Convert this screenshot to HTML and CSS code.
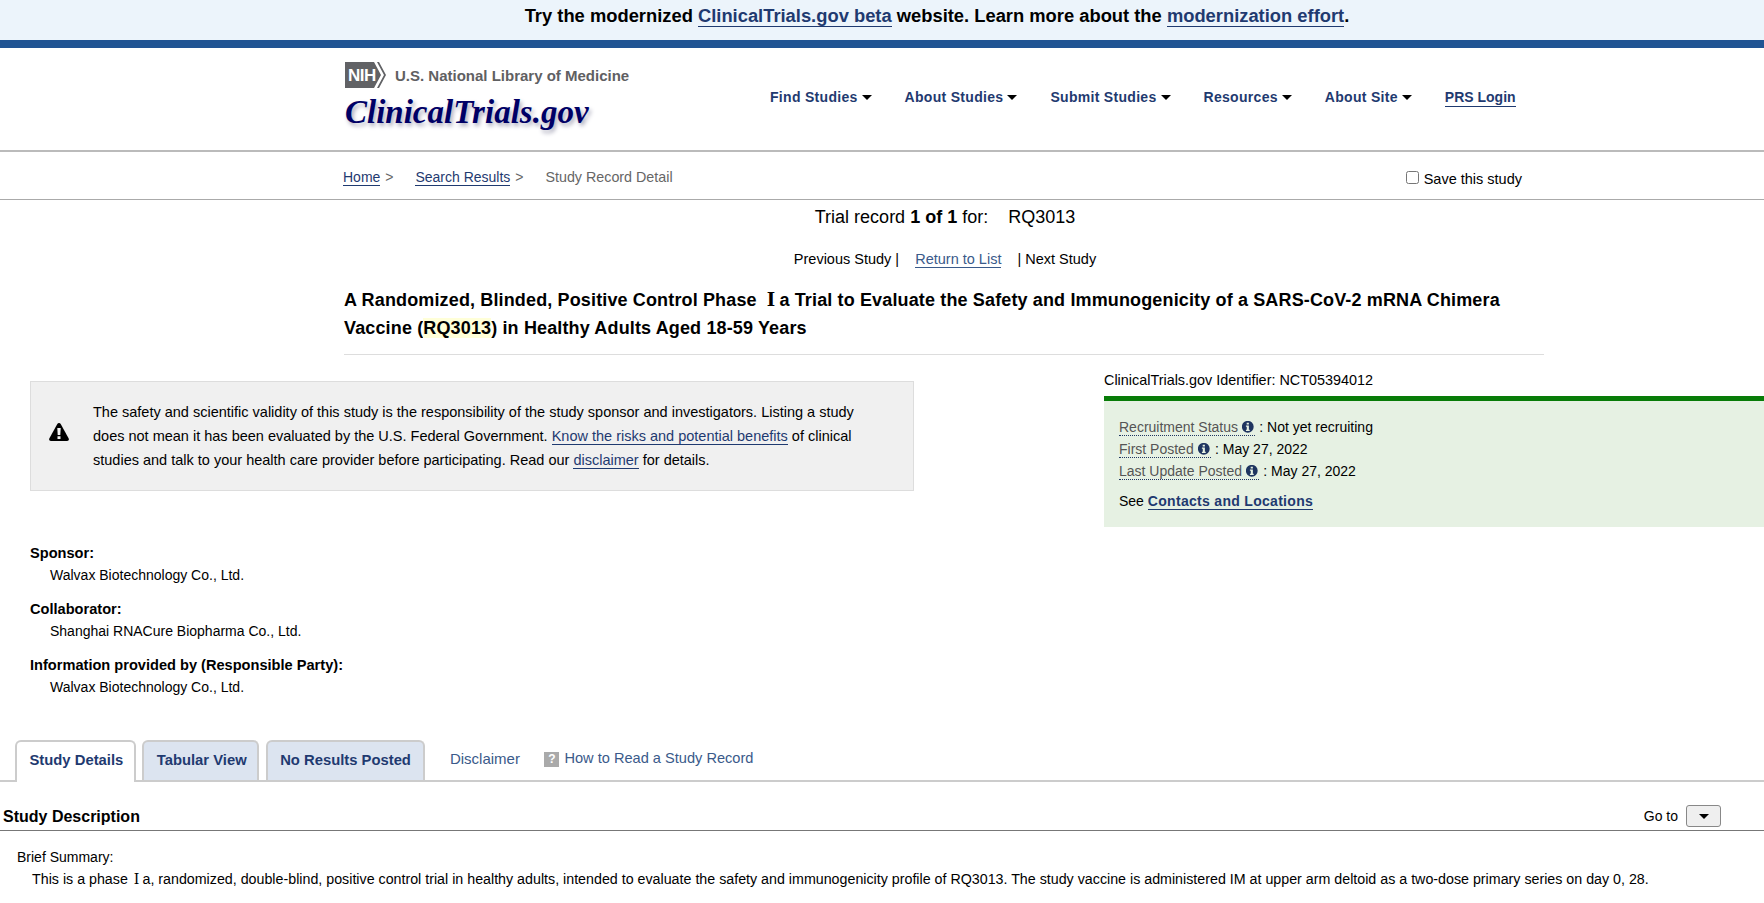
FILE: index.html
```html
<!DOCTYPE html>
<html lang="en">
<head>
<meta charset="utf-8">
<title>Study Record | ClinicalTrials.gov</title>
<link rel="stylesheet" href="styles.css">
</head>
<body>
<div class="banner">Try the modernized <a href="#">ClinicalTrials.gov beta</a> website. Learn more about the <a href="#">modernization effort</a>.</div>
<header class="header">
  <div class="brand">
    <div class="nlm">
      <svg class="nih" width="42" height="26" viewBox="0 0 42 26"><path d="M0 0H29L36 13L29 26H0Z" fill="#616265"/><path d="M32 0H34L41 13L34 26H32L39 13Z" fill="#616265"/><text x="3" y="19" class="nih-text">NIH</text></svg>
      <span>U.S. National Library of Medicine</span>
    </div>
    <div class="logo">ClinicalTrials.gov</div>
  </div>
  <nav class="nav">
    <a href="#">Find Studies<i></i></a>
    <a href="#">About Studies<i></i></a>
    <a href="#">Submit Studies<i></i></a>
    <a href="#">Resources<i></i></a>
    <a href="#">About Site<i></i></a>
    <a href="#" class="login">PRS Login</a>
  </nav>
</header>
<div class="crumbs">
  <div class="crumb-list">
    <span class="crumb"><a href="#">Home</a> &gt;</span>
    <span class="crumb"><a href="#">Search Results</a> &gt;</span>
    <span class="crumb-current">Study Record Detail</span>
  </div>
  <label class="save"><input type="checkbox"> Save this study</label>
</div>
<div class="record">Trial record <b>1 of 1</b> for: <span class="term">RQ3013</span></div>
<div class="pager">Previous Study | <a href="#">Return to List</a> | Next Study</div>
<h1 class="title">A Randomized, Blinded, Positive Control Phase <span class="roman">Ⅰ</span>a Trial to Evaluate the Safety and Immunogenicity of a SARS-CoV-2 mRNA Chimera Vaccine (<mark>RQ3013</mark>) in Healthy Adults Aged 18-59 Years</h1>
<main class="overview">
  <div class="left">
    <div class="warning">
      <svg class="warn-icon" width="20" height="18" viewBox="0 0 20 18"><path d="M10 0c.8 0 1.3.4 1.7 1l8 14.500c.6 1.200-.2 2.500-1.600 2.500H1.900C.5 18-.3 16.700.3 15.500l8-14.500C8.700.4 9.200 0 10 0Z" fill="#000"/><path d="M8.300 5h3.400l-.4 7H8.700Z M8.500 13.200h3v2.800h-3Z" fill="#f0f0f0"/></svg>
      <p>The safety and scientific validity of this study is the responsibility of the study sponsor and investigators. Listing a study does not mean it has been evaluated by the U.S. Federal Government. <a href="#">Know the risks and potential benefits</a> of clinical studies and talk to your health care provider before participating. Read our <a href="#">disclaimer</a> for details.</p>
    </div>
    <dl class="parties">
      <dt>Sponsor:</dt><dd>Walvax Biotechnology Co., Ltd.</dd>
      <dt>Collaborator:</dt><dd>Shanghai RNACure Biopharma Co., Ltd.</dd>
      <dt>Information provided by (Responsible Party):</dt><dd>Walvax Biotechnology Co., Ltd.</dd>
    </dl>
  </div>
  <aside class="right">
    <div class="ident">ClinicalTrials.gov Identifier: NCT05394012</div>
    <div class="status">
      <div class="status-row"><span class="term-tip">Recruitment Status <svg class="info" viewBox="1 1 14 14"><use href="#i"/></svg></span> : Not yet recruiting</div>
      <div class="status-row"><span class="term-tip">First Posted <svg class="info" viewBox="1 1 14 14"><use href="#i"/></svg></span> : May 27, 2022</div>
      <div class="status-row"><span class="term-tip">Last Update Posted <svg class="info" viewBox="1 1 14 14"><use href="#i"/></svg></span> : May 27, 2022</div>
      <div class="see">See <a href="#">Contacts and Locations</a></div>
    </div>
  </aside>
</main>
<svg class="defs" width="0" height="0"><symbol id="i" viewBox="0 0 16 16"><path fill-rule="evenodd" d="M8 1a7 7 0 1 1 0 14A7 7 0 0 1 8 1ZM6.700 3.200h2.600v2.200H6.700ZM5.800 6.600h3.500v5h1v1.500H5.800v-1.500h1V8.100h-1Z" fill="#1f3560"/></symbol></svg>
<div class="tabs">
  <a href="#" class="tab active">Study Details</a>
  <a href="#" class="tab">Tabular View</a>
  <a href="#" class="tab tab-wide">No Results Posted</a>
  <a href="#" class="tab-link">Disclaimer</a>
  <a href="#" class="tab-link help"><span class="q">?</span>How to Read a Study Record</a>
</div>
<div class="section-head">
  <h2>Study Description</h2>
  <div class="goto">Go to <button type="button" class="goto-btn" aria-label="Go to"><i></i></button></div>
</div>
<div class="summary">
  <div class="summary-label">Brief Summary:</div>
  <div class="summary-text">This is a phase <span class="roman">Ⅰ</span>a, randomized, double-blind, positive control trial in healthy adults, intended to evaluate the safety and immunogenicity profile of RQ3013. The study vaccine is administered IM at upper arm deltoid as a two-dose primary series on day 0, 28.</div>
</div>
</body>
</html>
```
FILE: styles.css
```css
* { box-sizing: border-box; }
html, body { margin: 0; padding: 0; }
body { font-family: "Liberation Sans", Arial, "Noto Sans CJK SC", sans-serif; font-size: 14px; color: #000; background: #fff; overflow: hidden; }
a { color: #1f3a70; text-decoration: none; }
.banner { height: 48px; background: #ecf4fb; border-bottom: 8px solid #205493; padding-left: 110px; text-align: center; font-size: 18.35px; font-weight: 700; line-height: 32px; }
.banner a { border-bottom: 1px solid #1f3a70; }
.header { height: 104px; border-bottom: 2px solid #bbb; display: flex; padding-left: 345px; }
.brand { width: 425px; padding-top: 14px; }
.nlm { display: flex; align-items: center; gap: 8px; height: 26px; font-size: 15px; font-weight: 700; color: #5f6062; }
.nih { display: block; }
.nih-text { font-family: "Liberation Sans", sans-serif; font-size: 17px; fill: #fff; letter-spacing: -.5px; }
.logo { font-family: "Liberation Serif", serif; font-style: italic; font-weight: 700; font-size: 33px; line-height: 38px; margin-top: 5px; color: #000066; text-shadow: 2px 3px 4px #aab; white-space: nowrap; }
.nav { display: flex; gap: 33px; padding-top: 40px; align-items: flex-start; font-weight: 700; letter-spacing: .3px; }
.nav a { line-height: 18px; white-space: nowrap; }
.nav i { display: inline-block; margin-left: 4px; vertical-align: 2px; border: 5px solid transparent; border-top-color: #000; border-bottom: 0; }
.nav .login { border-bottom: 1px solid #1f3a70; letter-spacing: 0; }
.crumbs { height: 48px; border-bottom: 1px solid #aaa; display: flex; justify-content: space-between; padding: 16px 242px 0 343px; color: #666; }
.crumb-list { display: flex; gap: 22px; line-height: 18px; }
.crumb { color: #666; }
.crumb a { border-bottom: 1px solid #1f3a70; margin-right: 1px; }
.crumb-current { font-size: 14.3px; }
.save { color: #000; font-size: 14.5px; line-height: 18px; padding-top: 2px; }
.save input { margin: 0 1px 0 0; width: 13px; height: 13px; vertical-align: 0; }
.record { margin: 7px 0 0; padding-left: 126px; text-align: center; font-size: 18px; line-height: 20px; }
.term { margin-left: 15px; }
.pager { margin-top: 23px; padding-left: 126px; text-align: center; font-size: 14.5px; line-height: 18px; }
.pager a { color: #3a5a8a; border-bottom: 1px solid #3a5a8a; margin: 0 12px; }
.title { margin: 18px 220px 0 344px; padding-bottom: 12px; border-bottom: 1px solid #ddd; font-size: 18px; font-weight: 700; line-height: 28px; letter-spacing: .14px; }
.roman { font-family: "DejaVu Serif", "Noto Sans CJK SC", serif; padding: 0 4px 0 5px; }
.summary-text .roman { font-weight: 400; padding: 0 3px 0 2px; }
mark { background: #ffffd8; color: #000; }
.overview { display: flex; align-items: flex-start; padding-left: 30px; }
.left { width: 1074px; padding-top: 26px; }
.warning { width: 884px; height: 110px; background: #f0f0f0; border: 1px solid #ddd; display: flex; align-items: center; padding: 0 46px 0 18px; font-size: 14.5px; }
.warn-icon { flex: none; margin: 0 24px 8px 0; }
.warning p { margin: 0; line-height: 24px; }
.warning a { border-bottom: 1px solid #1f3a70; }
.parties { margin: 51px 0 0; line-height: 22px; }
.parties dt { font-size: 14.6px; font-weight: 700; margin-top: 12px; }
.parties dt:first-child { margin-top: 0; }
.parties dd { margin: 0 0 0 20px; }
.right { flex: 1; padding-top: 16px; }
.ident { font-size: 14.4px; line-height: 18px; padding-bottom: 7px; }
.status { height: 131px; background: #e6f1e3; border-top: 5px solid #087c08; padding: 15px 15px 0; }
.status-row { line-height: 22px; }
.term-tip { color: #555; border-bottom: 1px dotted #1f3560; }
.info { width: 13.5px; height: 13.5px; vertical-align: -2.5px; }
.see { margin-top: 9px; line-height: 20px; }
.see a { font-weight: 700; border-bottom: 1px solid #1f3a70; letter-spacing: .3px; }
.defs { position: absolute; }
.tabs { display: flex; align-items: flex-end; height: 40px; margin-top: 44px; padding-left: 15px; border-bottom: 2px solid #ccc; gap: 6.5px; }
.tab { height: 40px; border: 2px solid #ccc; border-bottom: 0; border-radius: 6px 6px 0 0; background: #dce4f0; padding: 0 10.5px 0 12.5px; line-height: 36px; font-weight: 700; font-size: 14.8px; }
.tab.tab-wide { padding-right: 12.5px; }
.tab.active { background: #fff; height: 42px; margin-bottom: -2px; }
.tab-link { color: #3a5a8a; font-size: 15px; align-self: flex-start; line-height: 33px; margin-left: 18px; }
.help { margin-left: 18px; font-size: 14.6px; }
.q { display: inline-block; width: 15px; height: 15px; line-height: 15px; margin-right: 5px; background: #aaa; color: #fff; font-weight: 700; font-size: 12px; text-align: center; vertical-align: 0; }
.section-head { display: flex; justify-content: space-between; align-items: flex-end; height: 49px; padding: 0 43px 3px 3px; border-bottom: 1px solid #777; }
.section-head h2 { margin: 0 0 -1px; font-size: 16px; line-height: 22px; font-weight: 700; }
.goto { display: flex; align-items: center; gap: 8px; }
.goto-btn { width: 35px; height: 22px; padding: 0; background: #efefef; border: 1px solid #888; border-radius: 3px; }
.goto-btn i { display: block; width: 0; margin: 0 auto; border: 5px solid transparent; border-top-color: #000; border-bottom: 0; }
.summary { padding: 17px 0 0 17px; }
.summary-label { line-height: 18px; }
.summary-text { margin-left: 15px; font-size: 14.25px; line-height: 18px; margin-top: 4px; white-space: nowrap; }
```
